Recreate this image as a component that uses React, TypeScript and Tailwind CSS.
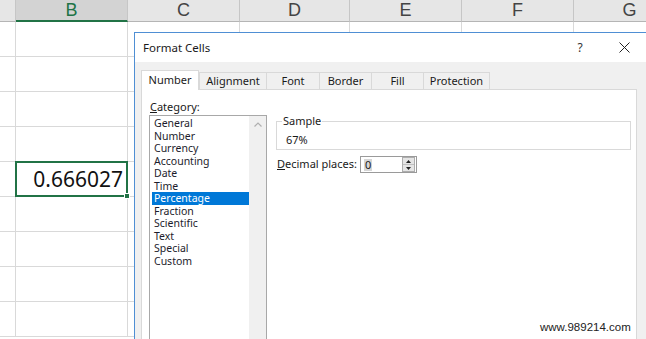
import React from "react";

const cols = [
  { w: "w-[16px]", label: "" },
  { w: "w-[112px]", label: "B" },
  { w: "w-[112px]", label: "C" },
  { w: "w-[110px]", label: "D" },
  { w: "w-[112px]", label: "E" },
  { w: "w-[112px]", label: "F" },
  { w: "w-[112px]", label: "G" },
];

const categories = [
  "General",
  "Number",
  "Currency",
  "Accounting",
  "Date",
  "Time",
  "Percentage",
  "Fraction",
  "Scientific",
  "Text",
  "Special",
  "Custom",
];

const tabs = [
  { label: "Number", w: "w-[58px]" },
  { label: "Alignment", w: "w-[67px]" },
  { label: "Font", w: "w-[53px]" },
  { label: "Border", w: "w-[52px]" },
  { label: "Fill", w: "w-[52px]" },
  { label: "Protection", w: "w-[67px]" },
];

function HeaderRow() {
  return (
    <div className="flex h-[22px] shrink-0">
      {cols.map((c, i) => {
        const selected = c.label === "B";
        return (
          <div
            key={i}
            className={
              "shrink-0 h-[22px] border-r border-[#c6c6c6] text-center text-[18px] leading-[20px] " +
              c.w +
              (selected
                ? " bg-[#d3d3d3] border-b-2 border-b-[#217346] text-[#217346]"
                : " bg-[#e6e6e6] border-b border-b-[#b5b5b5] text-[#444444]")
            }
            style={{ fontFamily: '"Liberation Sans", Arial, sans-serif' }}
          >
            {c.label}
          </div>
        );
      })}
    </div>
  );
}

function GridRow({ active }: { active?: boolean }) {
  return (
    <div className="flex h-[35px] shrink-0">
      {cols.map((c, i) => (
        <div
          key={i}
          className={
            "relative shrink-0 h-[35px] border-r border-b border-[#d9d9d9] bg-white " + c.w
          }
        >
          {active && i === 1 && (
            <div className="absolute -top-[1px] -left-[1px] -right-[1px] -bottom-[1px] border-2 border-[#217346] z-10">
              <div className="text-right pr-[3px] text-[21px] leading-[32px] text-[#111]">0.666027</div>
              <div className="absolute -right-[4px] -bottom-[4px] w-[6px] h-[6px] bg-[#217346] border border-white" />
            </div>
          )}
        </div>
      ))}
    </div>
  );
}

function Spinner() {
  return (
    <div className="flex flex-col w-[13px] h-[15px] ml-auto mr-[1px] border border-[#adadad]">
      <div className="flex-1 flex items-center justify-center bg-[#e5e5e5] border-b border-[#c0c0c0]">
        <svg width="5" height="3" viewBox="0 0 5 3">
          <path d="M0 3 L2.5 0 L5 3 Z" fill="#222" />
        </svg>
      </div>
      <div className="flex-1 flex items-center justify-center bg-[#e5e5e5]">
        <svg width="5" height="3" viewBox="0 0 5 3">
          <path d="M0 0 L2.5 3 L5 0 Z" fill="#222" />
        </svg>
      </div>
    </div>
  );
}

function Dialog() {
  return (
    <div
      className="absolute left-[134px] top-[32px] w-[530px] h-[320px] border border-[#4f8fd4] bg-[#f0f0f0] flex flex-col text-[11px] text-[#1a1a1a]"
      style={{ fontFamily: '"Noto Sans", sans-serif' }}
    >
      {/* Title bar */}
      <div className="h-[29px] bg-white flex items-center pl-[8px] shrink-0">
        <span className="text-[11.5px] text-[#1a1a1a]">Format Cells</span>
        <span className="ml-auto text-[12px] text-[#333] w-[10px] text-center mr-[34px]">?</span>
        <svg width="11" height="11" viewBox="0 0 11 11" className="mr-[33px]">
          <path d="M0.5 0.5 L10.5 10.5 M10.5 0.5 L0.5 10.5" stroke="#222" strokeWidth="1" />
        </svg>
      </div>
      {/* Body */}
      <div className="flex flex-col pt-[8px] pl-[6px] pr-[10px] flex-1">
        {/* Tabs */}
        <div className="flex items-end h-[19px] shrink-0">
          {tabs.map((t, i) => {
            const sel = i === 0;
            return (
              <div
                key={t.label}
                className={
                  "shrink-0 flex items-center justify-center border-t border-l border-[#d9d9d9] " +
                  t.w +
                  (i === tabs.length - 1 ? " border-r" : "") +
                  (sel
                    ? " h-[20px] bg-white relative z-10 mb-[-1px] border-r"
                    : " h-[17px] bg-[#f0f0f0]")
                }
              >
                {t.label}
              </div>
            );
          })}
        </div>
        {/* Panel */}
        <div className="w-[496px] flex-1 bg-white border border-[#d9d9d9] flex pl-[7px] pt-[10px]">
          {/* Left column */}
          <div className="flex flex-col shrink-0">
            <div className="leading-[14px] ml-[1px]">
              <span className="underline">C</span>ategory:
            </div>
            <div className="mt-[1px] w-[118px] h-[240px] border border-[#a8a8a8] flex bg-white">
              <div className="w-[99px] pl-[2px] pt-[1px] flex flex-col">
                {categories.map((c) => (
                  <div
                    key={c}
                    className={
                      "h-[12.5px] leading-[12.5px] px-[2px] text-[10.5px] " +
                      (c === "Percentage" ? "bg-[#0078d7] text-white" : "text-[#1c1c2c]")
                    }
                  >
                    {c}
                  </div>
                ))}
              </div>
              <div className="w-[17px] bg-[#f0f0f0] flex flex-col items-center pt-[6px]">
                <svg width="8" height="5" viewBox="0 0 8 5">
                  <path d="M0.5 4.5 L4 1 L7.5 4.5" stroke="#b0b0b0" strokeWidth="1.2" fill="none" />
                </svg>
              </div>
            </div>
          </div>
          {/* Right column */}
          <div className="flex flex-col ml-[9px] pt-[14px]">
            <fieldset className="w-[355px] border border-[#d9d9d9] pl-[5px] pb-[2px]">
              <legend className="px-[1px] leading-[14px]">Sample</legend>
              <div className="ml-[4px] mt-[5px] leading-[14px]">67%</div>
            </fieldset>
            <div className="flex items-center mt-[6px] h-[17px]">
              <div className="w-[84px] pl-[1px]">
                <span className="underline">D</span>ecimal places:
              </div>
              <div className="w-[57px] h-[17px] border border-[#9a9a9a] bg-white flex items-center pl-[3px]">
                <span className="bg-[#d6d6d6] px-[1px] leading-[12px]">0</span>
                <Spinner />
              </div>
            </div>
          </div>
        </div>
      </div>
    </div>
  );
}

export default function App() {
  return (
    <div
      className="relative w-[646px] h-[339px] overflow-hidden bg-white"
      style={{ fontFamily: '"Noto Sans", sans-serif' }}
    >
      <div className="flex flex-col w-[720px]">
        <HeaderRow />
        {Array.from({ length: 9 }).map((_, i) => (
          <GridRow key={i} active={i === 4} />
        ))}
      </div>
      <Dialog />
      <div
        className="absolute left-[540px] top-[320px] text-[11.5px] text-[#222] leading-[14px]"
        style={{ fontFamily: '"Liberation Sans", Arial, sans-serif' }}
      >
        www.989214.com
      </div>
    </div>
  );
}
